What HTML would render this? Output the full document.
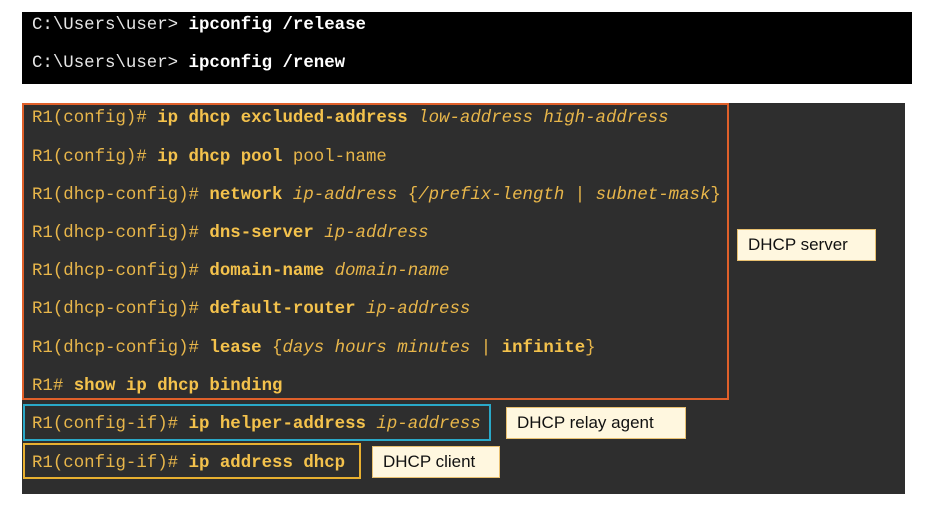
<!DOCTYPE html>
<html><head><style>
body{margin:0;width:942px;height:529px;background:#fff;position:relative;overflow:hidden;font-family:"Liberation Mono",monospace}
.abs{position:absolute}
#blk{left:22px;top:12px;width:890px;height:72px;background:#000}
.w{position:absolute;left:32px;color:#e6e6e6;font-size:17.4px;white-space:pre;line-height:20px}
#dk{left:22px;top:103px;width:883px;height:391px;background:#2e2e2e}
.l{position:absolute;left:32px;color:#e8b64a;font-size:17.4px;white-space:pre;line-height:20px}
.l b{color:#f4c24c}
.l i{color:#e8b64a}
.box{position:absolute;box-sizing:border-box}
.lab{position:absolute;background:#fff7df;border:1px solid #e8c070;font-family:"Liberation Sans",sans-serif;font-size:17px;color:#111;box-sizing:border-box;padding-left:10px;line-height:30px}
</style></head><body>
<div id="blk" class="abs"></div>
<div class="w" style="top:16px">C:\Users\user&gt; <b style="color:#fff">ipconfig /release</b></div>
<div class="w" style="top:54px">C:\Users\user&gt; <b style="color:#fff">ipconfig /renew</b></div>
<div id="dk" class="abs"></div>
<div class="box" style="left:22px;top:103px;width:707px;height:297px;border:2px solid #e0602a"></div>
<div class="box" style="left:23px;top:404px;width:468px;height:37px;border:2px solid #2aa8c8"></div>
<div class="box" style="left:23px;top:443px;width:338px;height:36px;border:2px solid #e8b030"></div>
<div class="l" style="top:109px">R1(config)# <b>ip dhcp excluded-address</b> <i>low-address high-address</i></div>
<div class="l" style="top:148px">R1(config)# <b>ip dhcp pool</b> pool-name</div>
<div class="l" style="top:186px">R1(dhcp-config)# <b>network</b> <i>ip-address</i> {<i>/prefix-length</i> | <i>subnet-mask</i>}</div>
<div class="l" style="top:224px">R1(dhcp-config)# <b>dns-server</b> <i>ip-address</i></div>
<div class="l" style="top:262px">R1(dhcp-config)# <b>domain-name</b> <i>domain-name</i></div>
<div class="l" style="top:300px">R1(dhcp-config)# <b>default-router</b> <i>ip-address</i></div>
<div class="l" style="top:339px">R1(dhcp-config)# <b>lease</b> {<i>days hours minutes</i> | <b>infinite</b>}</div>
<div class="l" style="top:377px">R1# <b>show ip dhcp binding</b></div>
<div class="l" style="top:415px">R1(config-if)# <b>ip helper-address</b> <i>ip-address</i></div>
<div class="l" style="top:454px">R1(config-if)# <b>ip address dhcp</b></div>
<div class="lab" style="left:737px;top:229px;width:139px;height:32px">DHCP server</div>
<div class="lab" style="left:506px;top:407px;width:180px;height:32px">DHCP relay agent</div>
<div class="lab" style="left:372px;top:446px;width:128px;height:32px">DHCP client</div>
</body></html>
